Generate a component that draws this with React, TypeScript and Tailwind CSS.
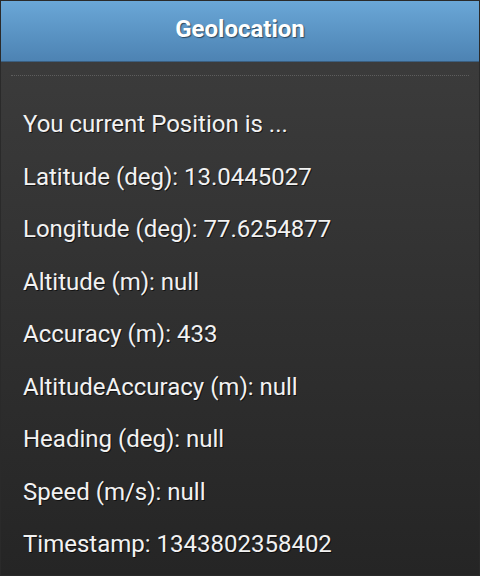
export default function App() {
    const rows = [
        'You current Position is ...',
        'Latitude (deg): 13.0445027',
        'Longitude (deg): 77.6254877',
        'Altitude (m): null',
        'Accuracy (m): 433',
        'AltitudeAccuracy (m): null',
        'Heading (deg): null',
        'Speed (m/s): null',
        'Timestamp: 1343802358402',
    ]

    return (
        <div className="w-[480px] h-[576px] overflow-hidden bg-gradient-to-b from-[#3e3e3e] to-[#252525] border border-[#2a2a2a] font-['Roboto',sans-serif]">
            {/* Header */}
            <div className="h-[61px] bg-gradient-to-b from-[#6aa7d7] to-[#4d83b3] border-b border-[#3b5f80] flex items-center justify-center">
                <h1 className="text-white text-[24px] leading-[28px] font-bold -mt-[4px] [text-shadow:1px_1px_1px_rgba(0,0,0,0.5)]">Geolocation</h1>
            </div>

            {/* Dotted separator */}
            <div className="mx-[10px] mt-[13px] border-t border-dotted border-[#5e5e5e]" />

            {/* Position details */}
            <div className="px-[22px] pt-[34px] flex flex-col gap-[24.5px]">
                {rows.map((row) => (
                    <p key={row} className="text-[#f2f2f2] text-[24px] leading-[28px] [text-shadow:1px_1px_0_rgba(0,0,0,0.6)]">
                        {row}
                    </p>
                ))}
            </div>
        </div>
    )
}
